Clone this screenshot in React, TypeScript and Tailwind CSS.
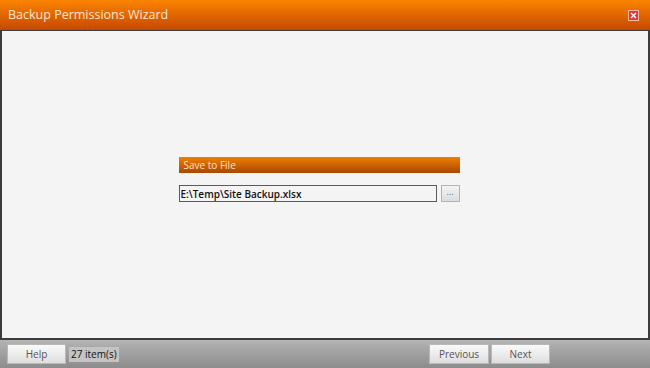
import { useState } from "react";

// Single-step wizard: orange title strip, blank work area, gray footer with nav buttons.
export default function App() {
  const [path, setPath] = useState("E:\\Temp\\Site Backup.xlsx");
  return (
    <div className="flex h-[368px] w-[650px] flex-col overflow-hidden bg-[#9c9c9c] font-['Open_Sans',sans-serif]">
      <header className="flex h-[30px] shrink-0 items-center justify-between bg-gradient-to-b from-[#fb8400] to-[#c64800] pl-[8px] pr-[11px]">
        <span className="text-[12.5px] leading-none text-[#fde4d6]">Backup Permissions Wizard</span>
        <button className="flex h-[11px] w-[11px] items-center justify-center border border-[#f7b7a0] bg-[#dc3a3a]">
          <svg width="7" height="7" viewBox="0 0 7 7">
            <path d="M1 1 L6 6 M6 1 L1 6" stroke="#fff" strokeWidth="1.4" />
          </svg>
        </button>
      </header>

      <main className="flex h-[310px] shrink-0 items-center justify-center border-x-2 border-b-2 border-t border-[#3c3c3c] bg-[#f4f4f4]">
        <div className="mb-[10px] mr-[12px] w-[281px]">
          <div className="flex h-[16px] items-center bg-gradient-to-b from-[#f08000] to-[#a84800] pl-[5px] text-[10px] text-[#fbe0cc]">
            Save to File
          </div>
          <div className="mt-[12px] flex gap-[4px]">
            <input
              value={path}
              onChange={(e) => setPath(e.target.value)}
              className="h-[17px] w-[258px] border border-[#5a5a5a] bg-[#f4f4f4] px-[1px] text-[10px] font-semibold text-[#111] outline-none"
            />
            <button className="flex h-[17px] w-[19px] items-start justify-center border border-[#b4b4b4] bg-gradient-to-b from-[#f4f4f4] to-[#dcdcdc] text-[9px] leading-[11px] text-[#666]">
              ...
            </button>
          </div>
        </div>
      </main>

      <footer className="flex flex-1 items-center bg-gradient-to-b from-[#b4b4b4] to-[#8c8c8c] pl-[7px] pr-[100px]">
        <button className="h-[20px] w-[59px] border border-[#b8b8b8] bg-gradient-to-b from-[#fafafa] to-[#dedede] text-[10px] text-[#555]">
          Help
        </button>
        <span className="ml-[3px] flex h-[15px] items-center bg-[#c4c4c4] px-[2px] text-[10px] text-[#111]">27 item(s)</span>
        <div className="ml-auto flex gap-[2px]">
          <button className="h-[20px] w-[60px] border border-[#b8b8b8] bg-gradient-to-b from-[#fafafa] to-[#dedede] text-[10px] text-[#555]">
            Previous
          </button>
          <button className="h-[20px] w-[59px] border border-[#b8b8b8] bg-gradient-to-b from-[#fafafa] to-[#dedede] text-[10px] text-[#555]">
            Next
          </button>
        </div>
      </footer>
    </div>
  );
}
